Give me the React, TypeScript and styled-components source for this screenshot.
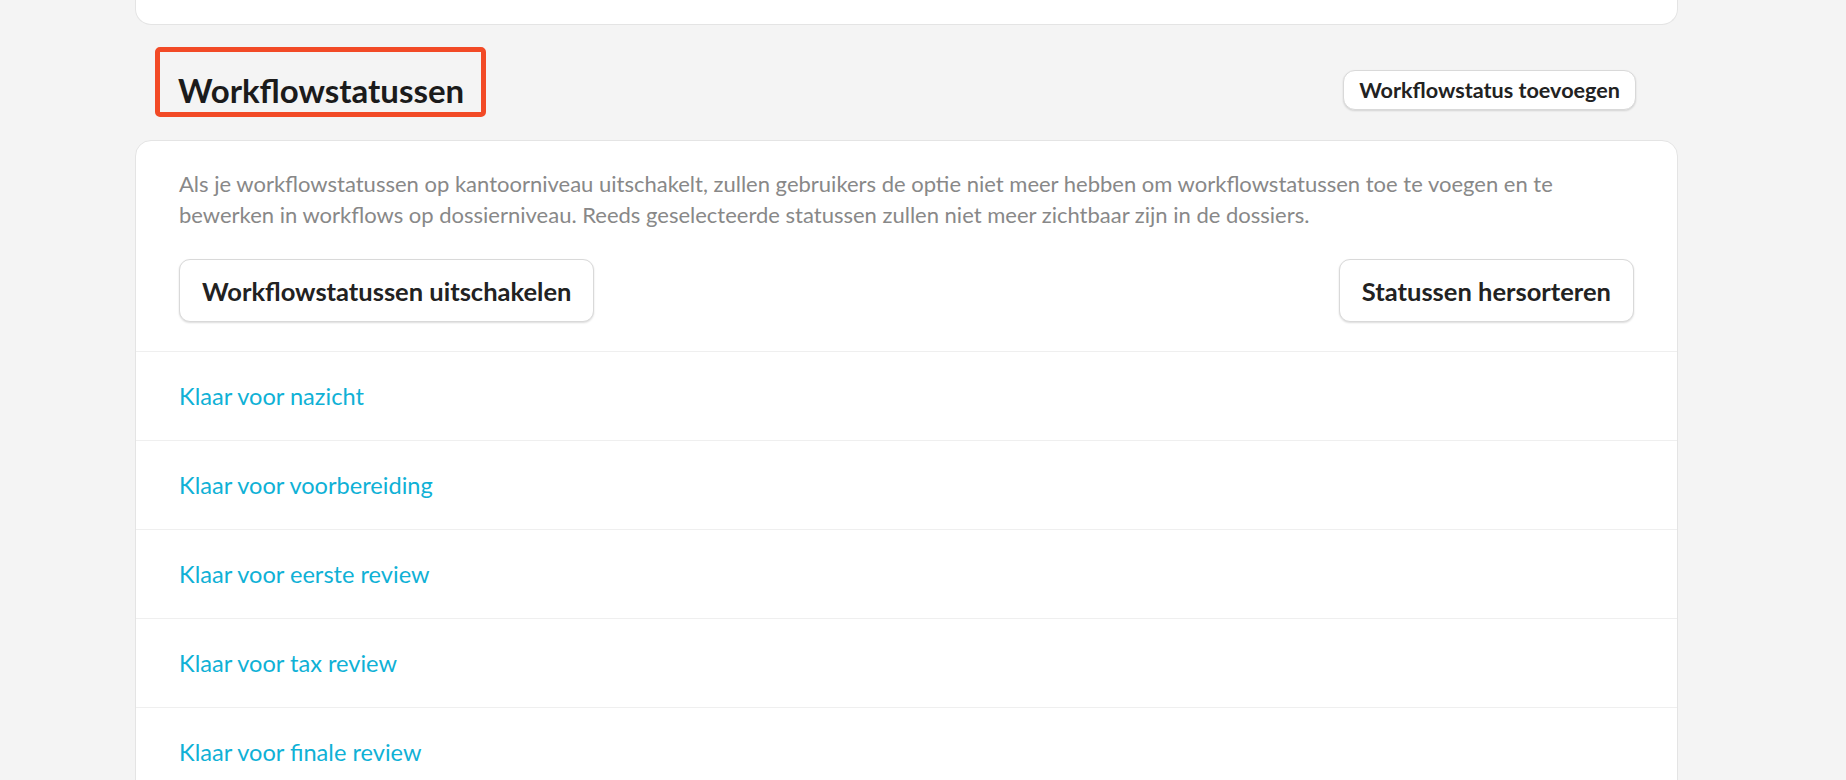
import React from "react";
import styled, { createGlobalStyle } from "styled-components";

const GlobalStyle = createGlobalStyle`
  html, body {
    margin: 0;
    padding: 0;
    background: #f4f4f4;
    font-family: Lato, "Open Sans", "Liberation Sans", sans-serif;
    -webkit-font-smoothing: antialiased;
  }
  * { box-sizing: border-box; }
`;

const Page = styled.div`
  width: 1543px;
  margin-left: 135px;
  padding-bottom: 40px;
`;

const TopCard = styled.div`
  height: 25px;
  background: #fff;
  border: 1px solid #e4e4e4;
  border-top: none;
  border-radius: 0 0 16px 16px;
`;

const Header = styled.div`
  display: flex;
  align-items: center;
  justify-content: space-between;
  padding: 45px 42px 30px 43px;
`;

const TitleWrap = styled.div`
  position: relative;
  height: 40px;
  display: flex;
  align-items: center;
`;

const Title = styled.h2`
  margin: 0;
  font-size: 33px;
  line-height: 40px;
  font-weight: 700;
  color: #1b1b1b;
`;

const Highlight = styled.span`
  position: absolute;
  left: -23px;
  right: -22px;
  top: -23px;
  bottom: -7px;
  border: 5px solid #f24a26;
  border-radius: 5px;
  pointer-events: none;
`;

const Button = styled.button<{ $size?: "sm" | "lg" }>`
  font-family: inherit;
  font-weight: 700;
  color: #222;
  background: #fff;
  border: 1px solid #d9d9d9;
  box-shadow: 0 1px 2px rgba(0, 0, 0, 0.14);
  cursor: pointer;
  white-space: nowrap;
  ${(p) =>
    p.$size === "sm"
      ? `
    height: 40px;
    padding: 0 15px;
    font-size: 21.6px;
    border-radius: 12px;
  `
      : `
    height: 63px;
    padding: 0 22px;
    font-size: 25.5px;
    border-radius: 11px;
  `}
`;

const Card = styled.div`
  background: #fff;
  border: 1px solid #e4e4e4;
  border-radius: 16px;
  overflow: hidden;
`;

const Intro = styled.div`
  padding: 27px 43px 29px 43px;
`;

const Description = styled.p`
  margin: 0;
  font-size: 22px;
  line-height: 31px;
  color: #888;
`;

const Actions = styled.div`
  display: flex;
  justify-content: space-between;
  margin-top: 29px;
`;

const StatusRow = styled.div`
  height: 89px;
  border-top: 1px solid #efefef;
  display: flex;
  align-items: center;
  padding: 0 43px;
`;

const StatusLink = styled.a`
  font-size: 23.6px;
  color: #0fb1d6;
  text-decoration: none;
  cursor: pointer;
`;

const statuses = [
  "Klaar voor nazicht",
  "Klaar voor voorbereiding",
  "Klaar voor eerste review",
  "Klaar voor tax review",
  "Klaar voor finale review",
];

export default function App() {
  return (
    <>
      <GlobalStyle />
      <Page>
        <TopCard />
        <Header>
          <TitleWrap>
            <Title>Workflowstatussen</Title>
            <Highlight />
          </TitleWrap>
          <Button $size="sm">Workflowstatus toevoegen</Button>
        </Header>
        <Card>
          <Intro>
            <Description>
              Als je workflowstatussen op kantoorniveau uitschakelt, zullen gebruikers de optie niet meer hebben om
              workflowstatussen toe te voegen en te bewerken in workflows op dossierniveau. Reeds geselecteerde
              statussen zullen niet meer zichtbaar zijn in de dossiers.
            </Description>
            <Actions>
              <Button>Workflowstatussen uitschakelen</Button>
              <Button>Statussen hersorteren</Button>
            </Actions>
          </Intro>
          {statuses.map((s) => (
            <StatusRow key={s}>
              <StatusLink>{s}</StatusLink>
            </StatusRow>
          ))}
        </Card>
      </Page>
    </>
  );
}
